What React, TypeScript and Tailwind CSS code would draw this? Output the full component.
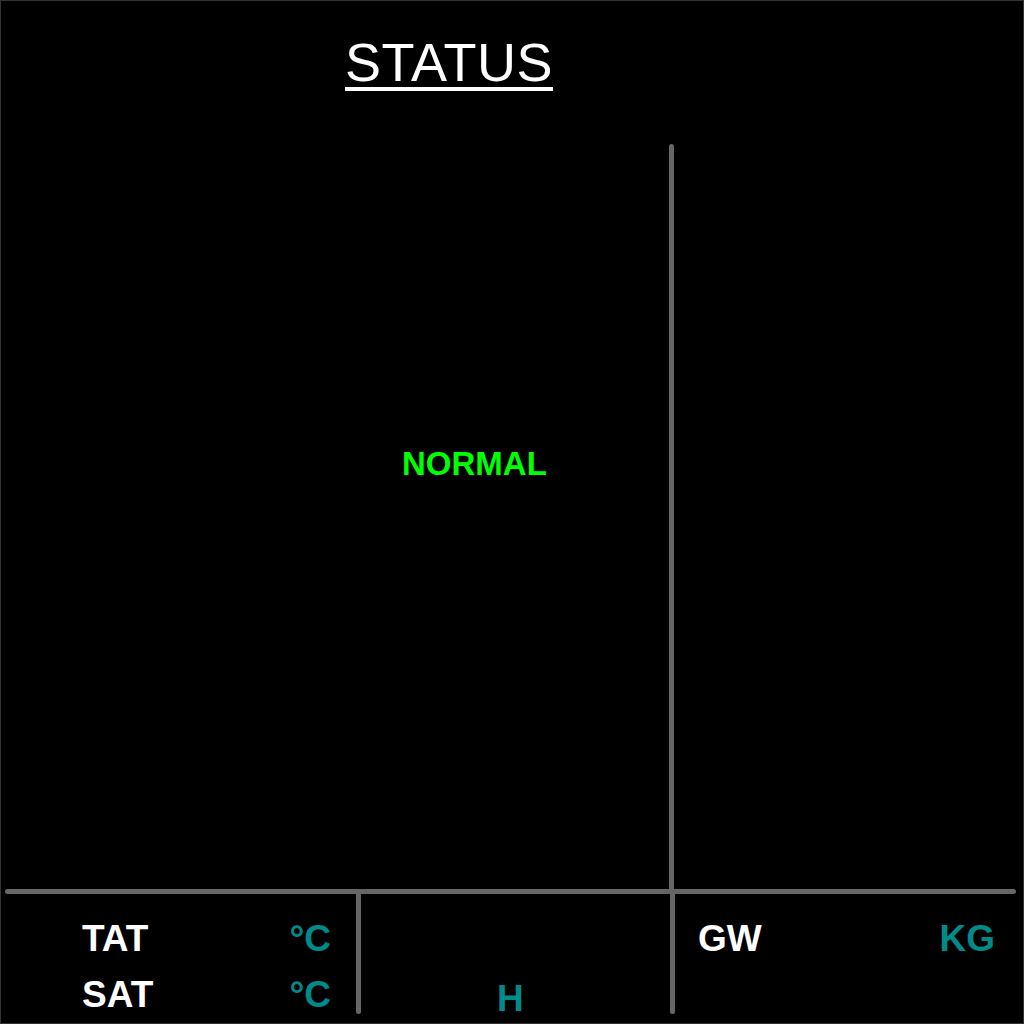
import React from "react";

export default function App() {
  const font = { fontFamily: '"Liberation Sans", Arial, sans-serif' };
  return (
    <div
      className="w-[1024px] h-[1024px] bg-black border border-[#333] box-border flex flex-col overflow-hidden"
      style={font}
    >
      {/* Header */}
      <div className="h-[143px] shrink-0 pt-[36px] pl-[344px]">
        <span className="inline-block text-white text-[54px] leading-[50px] border-b-4 border-white tracking-[0.5px]">
          STATUS
        </span>
      </div>

      {/* Upper area */}
      <div className="flex-1 flex min-h-0">
        <div className="w-[668px] pt-[303px] pl-[401px]">
          <span className="text-[#00ff00] font-bold text-[33px] leading-[33px]">
            NORMAL
          </span>
        </div>
        <div className="w-[5px] bg-[#666] rounded-t-full" />
        <div className="flex-1" />
      </div>

      {/* Horizontal divider */}
      <div className="h-[5px] shrink-0 ml-[4px] mr-[7px] bg-[#666] rounded-full" />

      {/* Bottom area */}
      <div className="h-[129px] shrink-0 flex">
        <div className="w-[355px] pl-[81px] pr-[25px] pt-[17px] flex flex-col">
          <div className="flex justify-between h-[56px] leading-[56px] text-[37px] font-bold">
            <span className="text-white">TAT</span>
            <span className="text-[#008b8b]">°C</span>
          </div>
          <div className="flex justify-between h-[56px] leading-[56px] text-[37px] font-bold">
            <span className="text-white">SAT</span>
            <span className="text-[#008b8b]">°C</span>
          </div>
        </div>
        <div className="w-[5px] h-[120px] bg-[#666] rounded-b-full" />
        <div className="w-[309px] pt-[77px] pl-[136px]">
          <span className="text-[#008b8b] text-[37px] font-bold leading-[56px] h-[56px]">
            H
          </span>
        </div>
        <div className="w-[5px] h-[120px] bg-[#666] rounded-b-full" />
        <div className="flex-1 pl-[23px] pr-[28px] pt-[17px]">
          <div className="flex justify-between h-[56px] leading-[56px] text-[37px] font-bold">
            <span className="text-white">GW</span>
            <span className="text-[#008b8b]">KG</span>
          </div>
        </div>
      </div>
    </div>
  );
}
